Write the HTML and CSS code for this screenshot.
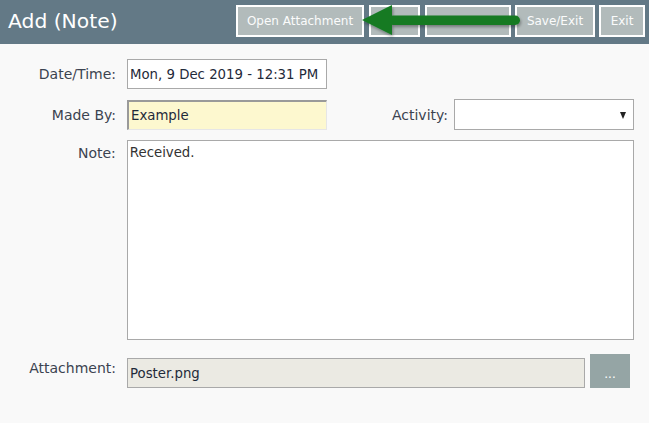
FILE: index.html
```html
<!DOCTYPE html>
<html>
<head>
<meta charset="utf-8">
<link rel="stylesheet" href="styles.css">
</head>
<body>
<div class="page">
  <header class="topbar">
    <h1 class="title">Add (Note)</h1>
    <div class="actions">
      <button class="hbtn w-open">Open Attachment</button>
      <button class="hbtn w-b2"></button>
      <button class="hbtn w-b3"></button>
      <button class="hbtn w-save">Save/Exit</button>
      <button class="hbtn w-exit">Exit</button>
    </div>
    <svg class="pointer" width="170" height="40" viewBox="0 0 170 40">
      <defs>
        <filter id="sh" x="-10%" y="-30%" width="130%" height="180%">
          <feDropShadow dx="1" dy="2" stdDeviation="1.5" flood-color="#000" flood-opacity="0.35"/>
        </filter>
      </defs>
      <g filter="url(#sh)" fill="#157a22">
        <path d="M3 20 L33 5 L33 35 Z"/>
        <rect x="29" y="15.5" width="132" height="9.5" rx="4.75"/>
      </g>
    </svg>
  </header>

  <main class="form">
    <div class="row">
      <label class="lbl">Date/Time:</label>
      <div class="field f-date">Mon, 9 Dec 2019 - 12:31 PM</div>
    </div>
    <div class="row">
      <label class="lbl">Made By:</label>
      <div class="field f-made">Example</div>
      <div class="activity">
        <label class="lbl-inline">Activity:</label>
        <div class="field f-select"><span class="caret"></span></div>
      </div>
    </div>
    <div class="row row-top">
      <label class="lbl lbl-top">Note:</label>
      <div class="field f-note">Received.</div>
    </div>
    <div class="row row-attach">
      <label class="lbl lbl-attach">Attachment:</label>
      <div class="field f-attach">Poster.png</div>
      <button class="browse">...</button>
    </div>
  </main>
</div>
</body>
</html>
```

FILE: styles.css
```css
* { box-sizing: border-box; }
html, body { margin: 0; padding: 0; }
body {
  background: #f9f9f9;
  font-family: "DejaVu Sans", Verdana, sans-serif;
  color: #333;
  width: 649px;
  height: 423px;
  overflow: hidden;
}
.topbar {
  position: relative;
  height: 44px;
  background: #637986;
  display: flex;
  align-items: center;
  padding: 0 4px 0 8px;
}
.title {
  margin: 0 0 2px 0;
  font-size: 20.3px;
  font-weight: normal;
  color: #fff;
}
.actions {
  margin-left: auto;
  display: flex;
  align-items: center;
}
.hbtn {
  height: 32px;
  border: 2px solid #fff;
  background: #b2bbbb;
  color: #fbfbfb;
  font-family: "DejaVu Sans", Verdana, sans-serif;
  font-size: 12px;
  padding: 0;
  margin: 0 0 2px 0;
}
.w-open { width: 128px; margin-right: 5px; }
.w-b2 { width: 51px; margin-right: 5px; }
.w-b3 { width: 86px; margin-right: 4px; }
.w-save { width: 80px; margin-right: 4px; }
.w-exit { width: 46px; }
.pointer {
  position: absolute;
  left: 359px;
  top: 0;
}
.form {
  padding: 15px 15px 0 0;
}
.row {
  display: flex;
  align-items: center;
  margin-bottom: 10px;
}
.row-top { align-items: flex-start; margin-bottom: 14px; }
.row-attach { align-items: flex-end; }
.lbl {
  width: 116px;
  text-align: right;
  margin-right: 11px;
  font-size: 14px;
  color: #3b4350;
}
.lbl-top { padding-top: 5px; }
.lbl-attach { padding-bottom: 12px; }
.field {
  background: #fff;
  border: 1px solid #a9a9a9;
  font-size: 13.3px;
  color: #1f2a3a;
  padding: 0 2px;
  display: flex;
  align-items: center;
}
.f-date { width: 200px; height: 30px; }
.f-made {
  width: 200px;
  height: 30px;
  background: #fdf8cf;
  border-width: 2px 1px 1px 2px;
  border-color: #9a9a9a #e6e6e6 #e6e6e6 #9a9a9a;
  padding-left: 2px;
}
.activity {
  margin-left: auto;
  display: flex;
  align-items: center;
}
.lbl-inline {
  font-size: 14px;
  color: #3b4350;
  margin-right: 6px;
}
.f-select {
  width: 180px;
  height: 31px;
  position: relative;
}
.caret {
  position: absolute;
  right: 7px;
  top: 12px;
  width: 0;
  height: 0;
  border-left: 3.5px solid transparent;
  border-right: 3.5px solid transparent;
  border-top: 7px solid #222;
}
.f-note {
  width: 508px;
  height: 200px;
  align-items: flex-start;
  padding-top: 4px;
  color: #333;
}
.f-attach {
  width: 458px;
  height: 30px;
  background: #ebeae3;
  margin-right: 5px;
}
.browse {
  width: 40px;
  height: 34px;
  border: none;
  background: #95a5a5;
  color: #fff;
  font-family: "DejaVu Sans", Verdana, sans-serif;
  font-size: 12px;
  padding: 6px 0 0 0;
  margin-bottom: 0;
}
```
